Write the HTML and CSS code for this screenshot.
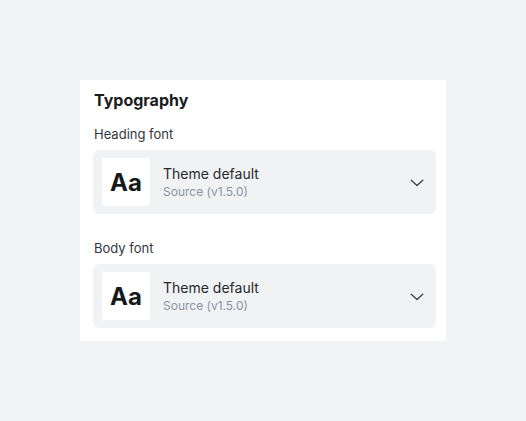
FILE: index.html
```html
<!DOCTYPE html>
<html>
<head>
<meta charset="utf-8">
<link rel="stylesheet" href="styles.css">
</head>
<body>
<div class="page">
  <section class="card">
    <h2 class="title">Typography</h2>
    <div class="field">
      <div class="label">Heading font</div>
      <div class="select">
        <div class="preview">Aa</div>
        <div class="info">
          <div class="name">Theme default</div>
          <div class="source">Source (v1.5.0)</div>
        </div>
        <svg class="chev" width="14" height="8" viewBox="0 0 14 8"><path d="M1.2 1.2L7 6.6L12.8 1.2" fill="none" stroke="#3b4048" stroke-width="1.3" stroke-linecap="round" stroke-linejoin="round"/></svg>
      </div>
    </div>
    <div class="field second">
      <div class="label">Body font</div>
      <div class="select">
        <div class="preview">Aa</div>
        <div class="info">
          <div class="name">Theme default</div>
          <div class="source">Source (v1.5.0)</div>
        </div>
        <svg class="chev" width="14" height="8" viewBox="0 0 14 8"><path d="M1.2 1.2L7 6.6L12.8 1.2" fill="none" stroke="#3b4048" stroke-width="1.3" stroke-linecap="round" stroke-linejoin="round"/></svg>
      </div>
    </div>
  </section>
</div>
</body>
</html>
```
FILE: styles.css
```css
html, body {
  margin: 0;
  padding: 0;
  background: #f2f3f5;
  font-family: Inter, "Noto Sans", sans-serif;
}
.page {
  width: 526px;
  height: 421px;
  padding: 80px 0 0 80px;
  box-sizing: border-box;
}
.card {
  width: 366px;
  background: #ffffff;
  padding: 10px 10px 13px 13px;
  box-sizing: border-box;
}
.title {
  margin: 0 0 0 1px;
  font-size: 16px;
  line-height: 20px;
  font-weight: 700;
  color: #1a1c20;
}
.field {
  margin-top: 16px;
}
.field.second {
  margin-top: 26px;
}
.label {
  font-size: 13px;
  line-height: 16px;
  color: #33373d;
  margin-left: 1px;
  margin-bottom: 8px;
}
.select {
  display: flex;
  align-items: center;
  background: #f1f2f4;
  border-radius: 6px;
  padding: 8px 8px 8px 9px;
  height: 64px;
  box-sizing: border-box;
}
.preview {
  width: 48px;
  height: 48px;
  background: #ffffff;
  border-radius: 4px;
  display: flex;
  align-items: center;
  justify-content: center;
  font-size: 24px;
  font-weight: 700;
  color: #16181c;
}
.info {
  flex: 1;
  margin-left: 13px;
  margin-top: 2px;
}
.name {
  font-size: 14px;
  line-height: 18px;
  color: #25282d;
}
.source {
  font-size: 12px;
  line-height: 18px;
  color: #8b94a3;
}
.chev {
  margin-right: 4px;
  margin-top: 2px;
}
```
